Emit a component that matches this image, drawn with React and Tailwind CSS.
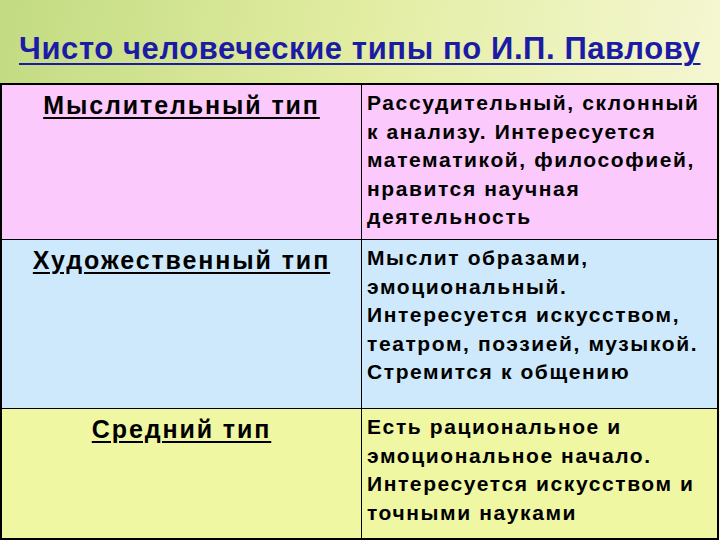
export default function App() {
  const font = { fontFamily: '"Liberation Sans", Arial, sans-serif' };
  const Lines = ({ lines }) => lines.map((l, i) => <div key={i} className="whitespace-nowrap">{l}</div>);
  const head = "text-[25px] font-bold underline underline-offset-[3px] decoration-[2px] leading-[28px] tracking-[1.9px] whitespace-nowrap";
  const body = "pl-[5px] pt-[4px] text-[21px] font-bold leading-[28.5px] tracking-[1.6px]";
  return (
    <div className="w-[720px] h-[540px] overflow-hidden flex flex-col bg-[linear-gradient(100deg,#c2db82_0%,#e2eda2_45%,#f9f9dc_100%)]" style={font}>
      <div className="h-[83px] flex items-end pb-[19px] pl-[19px]">
        <h1 className="text-[31px] leading-none font-bold text-[#1b1ba6] underline underline-offset-[4px] decoration-[2px] tracking-[0.6px] whitespace-nowrap">
          Чисто человеческие типы по И.П. Павлову
        </h1>
      </div>
      <div className="w-[719px] border-2 border-black grid grid-cols-[360px_1fr] grid-rows-[155px_169px_1fr] flex-1 text-black">
        <div className="bg-[#fbc9fb] border-r border-b border-black flex justify-center pt-[6px]">
          <span className={head}>Мыслительный тип</span>
        </div>
        <div className={"bg-[#fbc9fb] border-b border-black " + body}>
          <Lines lines={["Рассудительный, склонный", "к анализу. Интересуется", "математикой, философией,", "нравится научная", "деятельность"]} />
        </div>
        <div className="bg-[#cde9fb] border-r border-b border-black flex justify-center pt-[6px]">
          <span className={head}>Художественный тип</span>
        </div>
        <div className={"bg-[#cde9fb] border-b border-black " + body}>
          <Lines lines={["Мыслит образами,", "эмоциональный.", "Интересуется искусством,", "театром, поэзией, музыкой.", "Стремится к общению"]} />
        </div>
        <div className="bg-[#eff7a2] border-r border-black flex justify-center pt-[6px]">
          <span className={head}>Средний тип</span>
        </div>
        <div className={"bg-[#eff7a2] " + body}>
          <Lines lines={["Есть рациональное и", "эмоциональное начало.", "Интересуется искусством и", "точными науками"]} />
        </div>
      </div>
    </div>
  );
}
